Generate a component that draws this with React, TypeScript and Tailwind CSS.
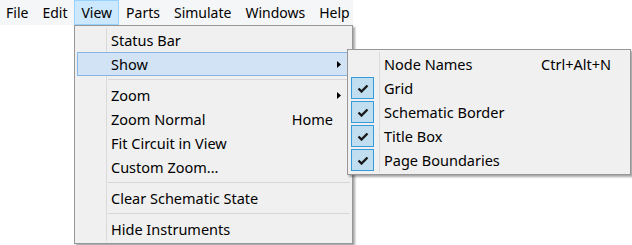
import React from 'react';

const menuBar = ['File', 'Edit', 'View', 'Parts', 'Simulate', 'Windows', 'Help'];

type Item =
    | { kind: 'sep' }
    | { kind: 'item'; label: string; shortcut?: string; sub?: boolean; active?: boolean; checked?: boolean };

const viewItems: Item[] = [
    { kind: 'item', label: 'Status Bar' },
    { kind: 'item', label: 'Show', sub: true, active: true },
    { kind: 'sep' },
    { kind: 'item', label: 'Zoom', sub: true },
    { kind: 'item', label: 'Zoom Normal', shortcut: 'Home' },
    { kind: 'item', label: 'Fit Circuit in View' },
    { kind: 'item', label: 'Custom Zoom...' },
    { kind: 'sep' },
    { kind: 'item', label: 'Clear Schematic State' },
    { kind: 'sep' },
    { kind: 'item', label: 'Hide Instruments' },
];

const showItems: Item[] = [
    { kind: 'item', label: 'Node Names', shortcut: 'Ctrl+Alt+N' },
    { kind: 'item', label: 'Grid', checked: true },
    { kind: 'item', label: 'Schematic Border', checked: true },
    { kind: 'item', label: 'Title Box', checked: true },
    { kind: 'item', label: 'Page Boundaries', checked: true },
];

const Check: React.FC = () => (
    <svg width="12" height="9" viewBox="0 0 12 9">
        <path d="M1.5 4.5 L4.5 7.5 L10.5 1.5" fill="none" stroke="#1a1a1a" strokeWidth="2.4" />
    </svg>
);

const Arrow: React.FC = () => (
    <svg width="4" height="7" viewBox="0 0 4 7">
        <path d="M0 0 L4 3.5 L0 7 Z" fill="#000" />
    </svg>
);

const MenuRow: React.FC<{ item: Item }> = ({ item }) => {
    if (item.kind === 'sep') {
        return (
            <div className="flex h-[7px]">
                <div className="w-[29px]" />
                <div className="flex-1 border-l border-[#dadada] flex flex-col justify-center pl-[1px]">
                    <div className="h-px bg-[#d7d7d7]" />
                </div>
            </div>
        );
    }
    return (
        <div
            className={
                'flex h-[24px] items-center ' +
                (item.active ? 'bg-[#d1e3f4] border border-[#84b5e7]' : 'border border-transparent')
            }
        >
            <div className="w-[28px] h-full flex items-center">
                {item.checked && (
                    <div className="w-[23px] h-[22px] bg-[#c1def0] border border-[#349bdb] flex items-center justify-center">
                        <Check />
                    </div>
                )}
            </div>
            <div
                className={
                    'flex-1 h-[24px] -my-px flex items-center border-l pl-[4px] pt-px ' +
                    (item.active ? 'border-transparent' : 'border-[#dadada]')
                }
            >
                <span className="flex-1">{item.label}</span>
                {item.shortcut && <span>{item.shortcut}</span>}
                <span className="w-[16px] flex justify-end pr-[8px]">{item.sub && <Arrow />}</span>
            </div>
        </div>
    );
};

const App: React.FC = () => {
    return (
        <div
            className="relative w-[632px] h-[245px] bg-white text-black text-[14.5px] overflow-hidden"
            style={{ fontFamily: '"Noto Sans", "Open Sans", sans-serif' }}
        >
            <div className="flex w-[353px] h-[25px] bg-[#f5f6f7] overflow-hidden text-[14px]">
                {menuBar.map((m, i) => (
                    <div
                        key={m}
                        className={
                            'shrink-0 h-[25px] flex items-center px-[6px] border ' +
                            (i === 0 ? '-ml-[1px] ' : '') +
                            (m === 'View' ? 'bg-[#cce8ff] border-[#99d1ff]' : 'border-transparent')
                        }
                    >
                        {m}
                    </div>
                ))}
            </div>

            <div className="absolute left-[74px] top-[25px] w-[279px] bg-[#f0f0f0] border border-[#979797] p-[2px] shadow-[2px_2px_2px_rgba(0,0,0,0.35)]">
                {viewItems.map((it, i) => (
                    <MenuRow key={i} item={it} />
                ))}
            </div>

            <div className="absolute left-[347px] top-[49px] w-[284px] bg-[#f0f0f0] border border-[#979797] p-[2px] shadow-[2px_2px_2px_rgba(0,0,0,0.35)]">
                {showItems.map((it, i) => (
                    <MenuRow key={i} item={it} />
                ))}
            </div>
        </div>
    );
};

export default App;
